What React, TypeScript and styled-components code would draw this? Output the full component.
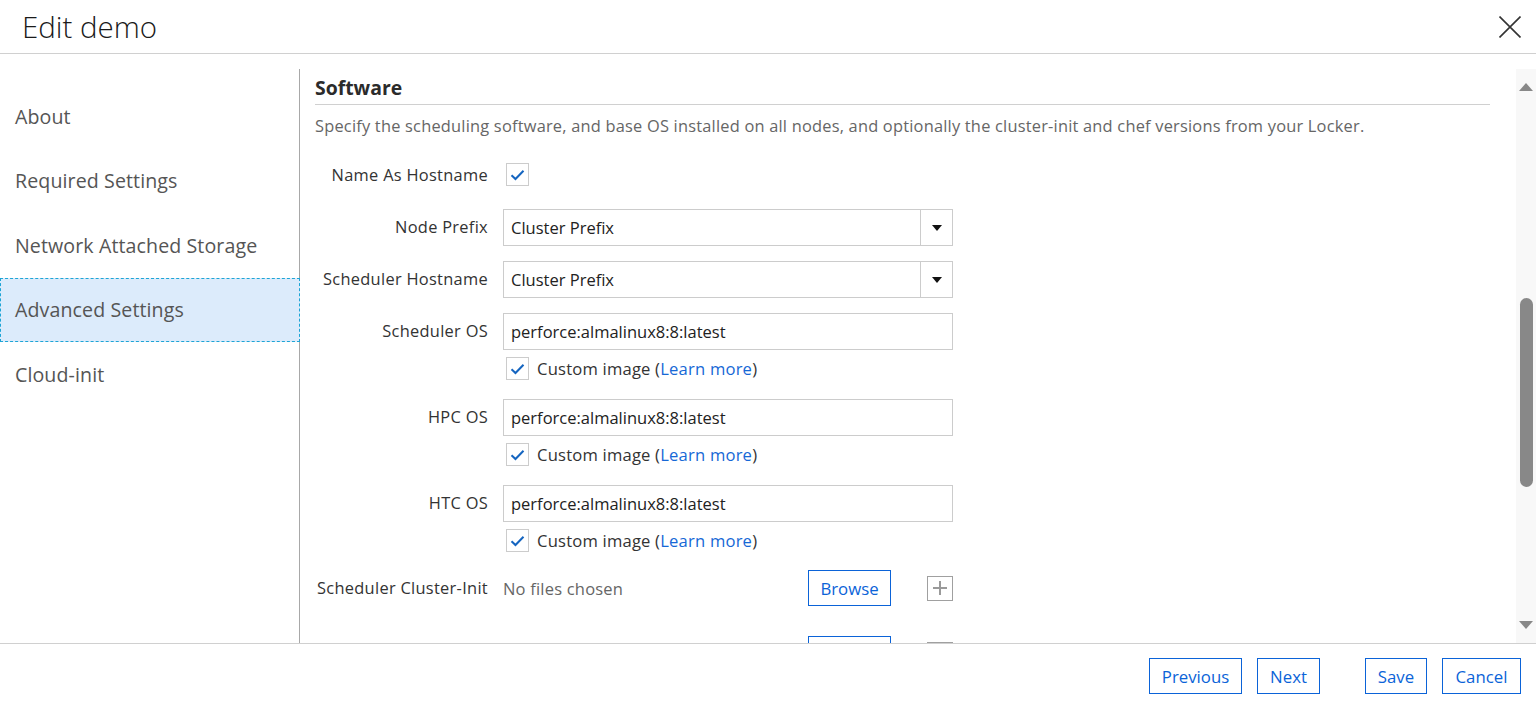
import React from 'react';
import styled, { createGlobalStyle } from 'styled-components';

const GlobalStyle = createGlobalStyle`
  html, body {
    margin: 0;
    padding: 0;
    background: #fff;
    font-family: 'Open Sans', 'Noto Sans', sans-serif;
    overflow: hidden;
  }
`;

const Dialog = styled.div`
  display: flex;
  flex-direction: column;
  width: 1536px;
  height: 708px;
  background: #fff;
`;

const Header = styled.div`
  display: flex;
  align-items: center;
  justify-content: space-between;
  height: 53px;
  padding: 0 12px 0 22px;
  border-bottom: 1px solid #d0d0d0;
`;

const Title = styled.h1`
  margin: 0;
  font-size: 29.5px;
  font-weight: 300;
  color: #1a1a1a;
`;

const CloseButton = styled.button`
  display: flex;
  align-items: center;
  justify-content: center;
  width: 28px;
  height: 28px;
  padding: 0;
  border: none;
  background: none;
  cursor: pointer;
`;

const Body = styled.div`
  display: flex;
  flex: 1;
  min-height: 0;
  padding-top: 15px;
`;

const Nav = styled.nav`
  display: flex;
  flex-direction: column;
  width: 299px;
  padding-top: 15px;
  border-right: 1px solid #a8a8a8;
`;

const NavItem = styled.div<{ $active?: boolean }>`
  display: flex;
  align-items: center;
  height: 64.5px;
  box-sizing: border-box;
  padding-left: 14px;
  font-size: 19.6px;
  letter-spacing: 0.1px;
  color: #555;
  cursor: pointer;
  background: ${p => (p.$active ? '#dcebfb' : 'transparent')};
  border: 1px dashed ${p => (p.$active ? '#1ea5d6' : 'transparent')};
  margin-right: -1px;
`;

const ScrollArea = styled.div`
  display: flex;
  flex: 1;
  min-width: 0;
  overflow: hidden;
`;

const Content = styled.div`
  flex: 1;
  padding: 0 26px 0 15px;
  overflow: hidden;
`;

const SectionTitle = styled.h2`
  margin: 0;
  padding-top: 5px;
  height: 36px;
  box-sizing: border-box;
  font-size: 19.4px;
  font-weight: 700;
  color: #2b2b2b;
  border-bottom: 1px solid #d0d0d0;
`;

const Description = styled.p`
  margin: 10px 0 0;
  font-size: 16.4px;
  letter-spacing: 0.21px;
  line-height: 22px;
  color: #666;
  white-space: nowrap;
`;

const Field = styled.div<{ $top: number }>`
  display: grid;
  grid-template-columns: 173px 450px;
  column-gap: 15px;
  margin-top: ${p => p.$top}px;
`;

const Label = styled.label<{ $h?: number }>`
  text-align: right;
  font-size: 16.4px;
  letter-spacing: 0.3px;
  line-height: ${p => p.$h ?? 36}px;
  color: #333;
  white-space: nowrap;
`;

const Control = styled.div`
  display: flex;
  flex-direction: column;
`;

const TextInput = styled.div`
  display: flex;
  align-items: center;
  height: 37px;
  box-sizing: border-box;
  padding-left: 7px;
  border: 1px solid #ccc;
  font-size: 16.5px;
  color: #222;
`;

const Select = styled(TextInput)`
  padding-left: 0;
`;

const SelectValue = styled.span`
  flex: 1;
  padding-left: 7px;
`;

const SelectArrow = styled.span`
  display: flex;
  align-items: center;
  justify-content: center;
  width: 31px;
  height: 100%;
  border-left: 1px solid #ccc;

  &::after {
    content: '';
    border-left: 5px solid transparent;
    border-right: 5px solid transparent;
    border-top: 6px solid #111;
  }
`;

const CheckRow = styled.div<{ $top?: number }>`
  display: flex;
  align-items: center;
  gap: 8px;
  margin-top: ${p => p.$top ?? 7}px;
  padding-left: 3px;
  font-size: 16.6px;
  letter-spacing: 0.2px;
  color: #333;
`;

const Box = styled.span`
  display: flex;
  align-items: center;
  justify-content: center;
  width: 23px;
  height: 23px;
  box-sizing: border-box;
  border: 1px solid #ccc;
  background: #fff;
`;

const Link = styled.a`
  color: #1668d6;
  text-decoration: none;
`;

const FileRow = styled.div`
  display: flex;
  align-items: center;
  height: 36px;
`;

const FileText = styled.span`
  flex: 1;
  font-size: 16.5px;
  letter-spacing: 0.2px;
  color: #666;
`;

const OutlineButton = styled.button<{ $w: number }>`
  width: ${p => p.$w}px;
  height: 36px;
  padding: 0;
  border: 1px solid #0b63d8;
  background: #fff;
  color: #0b63d8;
  font-family: inherit;
  font-size: 16.8px;
  cursor: pointer;
`;

const PlusBox = styled.span`
  display: flex;
  align-items: center;
  justify-content: center;
  width: 26px;
  height: 25px;
  margin-left: 36px;
  box-sizing: border-box;
  border: 1px solid #a0a0a0;
`;

const Scrollbar = styled.div`
  display: flex;
  flex-direction: column;
  align-items: center;
  width: 20px;
  background: #f8f8f8;
`;

const ScrollArrow = styled.span<{ $down?: boolean }>`
  display: flex;
  align-items: center;
  justify-content: center;
  height: 36px;
  width: 100%;

  &::after {
    content: '';
    border-left: 7px solid transparent;
    border-right: 7px solid transparent;
    ${p => (p.$down ? 'border-top' : 'border-bottom')}: 8px solid #888;
  }
`;

const ScrollTrack = styled.div`
  flex: 1;
  display: flex;
  justify-content: center;
`;

const Thumb = styled.div<{ $top: number; $h: number }>`
  width: 13px;
  height: ${p => p.$h}px;
  margin-top: ${p => p.$top}px;
  border-radius: 7px;
  background: #888;
`;

const Footer = styled.div`
  display: flex;
  align-items: center;
  justify-content: flex-end;
  height: 64px;
  padding-right: 15px;
  border-top: 1px solid #d0d0d0;
  gap: 15px;
`;

const Spacer = styled.span`
  width: 15px;
`;

const Check = () => (
  <Box>
    <svg width="15" height="12" viewBox="0 0 15 12">
      <path d="M1.5 6.2 L5.5 10 L13.5 1.8" fill="none" stroke="#1565c0" strokeWidth="2" />
    </svg>
  </Box>
);

const Plus = () => (
  <PlusBox>
    <svg width="16" height="16" viewBox="0 0 16 16">
      <path d="M8 1 V15 M1 8 H15" stroke="#9a9a9a" strokeWidth="2" />
    </svg>
  </PlusBox>
);

const navItems = ['About', 'Required Settings', 'Network Attached Storage', 'Advanced Settings', 'Cloud-init'];

const OsField = ({ label, top }: { label: string; top: number }) => (
  <Field $top={top}>
    <Label>{label}</Label>
    <Control>
      <TextInput>perforce:almalinux8:8:latest</TextInput>
      <CheckRow>
        <Check />
        <span>
          Custom image (<Link href="#">Learn more</Link>)
        </span>
      </CheckRow>
    </Control>
  </Field>
);

const ClusterInitField = ({ label, top }: { label: string; top: number }) => (
  <Field $top={top}>
    <Label>{label}</Label>
    <FileRow>
      <FileText>No files chosen</FileText>
      <OutlineButton $w={83}>Browse</OutlineButton>
      <Plus />
    </FileRow>
  </Field>
);

export default function App() {
  return (
    <>
      <GlobalStyle />
      <Dialog>
        <Header>
          <Title>Edit demo</Title>
          <CloseButton aria-label="Close">
            <svg width="22" height="22" viewBox="0 0 22 22">
              <path d="M0.5 0.5 L21.5 21.5 M21.5 0.5 L0.5 21.5" stroke="#333" strokeWidth="1.6" />
            </svg>
          </CloseButton>
        </Header>
        <Body>
          <Nav>
            {navItems.map(item => (
              <NavItem key={item} $active={item === 'Advanced Settings'}>
                {item}
              </NavItem>
            ))}
          </Nav>
          <ScrollArea>
            <Content>
              <SectionTitle>Software</SectionTitle>
              <Description>
                Specify the scheduling software, and base OS installed on all nodes, and optionally the
                cluster-init and chef versions from your Locker.
              </Description>
              <Field $top={26}>
                <Label $h={23}>Name As Hostname</Label>
                <Control>
                  <CheckRow $top={0}>
                    <Check />
                  </CheckRow>
                </Control>
              </Field>
              <Field $top={23}>
                <Label>Node Prefix</Label>
                <Select>
                  <SelectValue>Cluster Prefix</SelectValue>
                  <SelectArrow />
                </Select>
              </Field>
              <Field $top={15}>
                <Label>Scheduler Hostname</Label>
                <Select>
                  <SelectValue>Cluster Prefix</SelectValue>
                  <SelectArrow />
                </Select>
              </Field>
              <OsField label="Scheduler OS" top={15} />
              <OsField label="HPC OS" top={19} />
              <OsField label="HTC OS" top={19} />
              <ClusterInitField label="Scheduler Cluster-Init" top={18} />
              <ClusterInitField label="HPC Cluster-Init" top={30} />
            </Content>
            <Scrollbar>
              <ScrollArrow />
              <ScrollTrack>
                <Thumb $top={193} $h={189} />
              </ScrollTrack>
              <ScrollArrow $down />
            </Scrollbar>
          </ScrollArea>
        </Body>
        <Footer>
          <OutlineButton $w={93}>Previous</OutlineButton>
          <OutlineButton $w={63}>Next</OutlineButton>
          <Spacer />
          <OutlineButton $w={62}>Save</OutlineButton>
          <OutlineButton $w={79}>Cancel</OutlineButton>
        </Footer>
      </Dialog>
    </>
  );
}
